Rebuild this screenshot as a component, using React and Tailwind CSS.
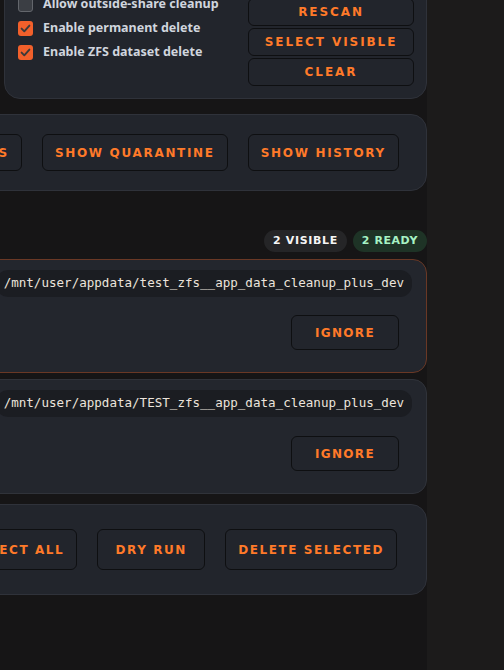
import React from "react";

const ui = { fontFamily: "'DejaVu Sans', 'Noto Sans', sans-serif" };
const labelFont = { fontFamily: "'Noto Sans', 'DejaVu Sans', sans-serif" };

function Check({ checked }) {
  if (!checked) {
    return (
      <span className="w-[15px] h-[15px] shrink-0 rounded-[3px] bg-[#3b3e44] border border-[#63666c]" />
    );
  }
  return (
    <span className="w-[15px] h-[15px] shrink-0 rounded-[3px] bg-[#f2602b] flex items-center justify-center">
      <svg width="15" height="15" viewBox="0 0 15 15">
        <polyline points="3.6,7.6 6.3,10.3 11.4,4.6" fill="none" stroke="#3b3a3a" strokeWidth="1.9" strokeLinecap="round" strokeLinejoin="round" />
      </svg>
    </span>
  );
}

function Btn({ children, className = "" }) {
  return (
    <button
      className={
        "flex items-center justify-center rounded-[6px] border border-[#0e0f11] bg-[#22252c] text-[#ff7a29] text-[12px] font-bold uppercase whitespace-nowrap " +
        className
      }
    >
      {children}
    </button>
  );
}

function Card({ path, selected, gap }) {
  return (
    <div
      className={
        "rounded-[14px] border bg-[#23262d] pt-[10px] pb-[22px] pl-4 pr-[14px] flex flex-col " +
        gap +
        (selected ? " border-[#6a3825]" : " border-[#30333a]")
      }
    >
      <div className="flex items-center justify-between">
        <div className="flex items-center gap-[10px] text-[#d0d5de] text-[12.5px] font-bold" style={labelFont}>
          <Check checked={selected} />
          <span>test_zfs__app_data_cleanup_plus_dev</span>
        </div>
        <div
          className="h-[27px] flex items-center rounded-xl bg-[#1b1d22] px-2 text-[12.55px] text-[#ece4dc]"
          style={{ fontFamily: "'DejaVu Sans Mono', monospace" }}
        >
          {path}
        </div>
      </div>
      <div className="flex justify-end pr-[13px]">
        <Btn className="h-[35px] min-w-[108px] px-3 tracking-[0.11em]">Ignore</Btn>
      </div>
    </div>
  );
}

export default function App() {
  return (
    <div className="h-[670px] w-full overflow-hidden bg-[#1c1b1b]" style={ui}>
      <div className="w-[847px] ml-[-420px] mt-[-44px] min-h-[740px] bg-[#161516] flex flex-col">
        <div className="grid grid-cols-[412px_1fr] gap-3 items-start">
          <div className="rounded-2xl border border-[#2f323a] bg-[#22252c] p-4 text-[#d0d5de] text-[12.5px] font-bold" style={labelFont}>
            Scan settings
          </div>
          <div className="rounded-2xl border border-[#2f323a] bg-[#22252c] pt-[11px] pb-3 pl-[13px] pr-3 flex justify-between">
            <div className="flex flex-col" style={labelFont}>
              {[
                ["Include system shares", true],
                ["Allow outside-share cleanup", false],
                ["Enable permanent delete", true],
                ["Enable ZFS dataset delete", true],
              ].map(([label, c]) => (
                <label key={label} className="h-6 flex items-center gap-[10px] text-[12.5px] font-bold text-[#d0d5de]">
                  <Check checked={c} />
                  <span>{label}</span>
                </label>
              ))}
            </div>
            <div className="w-[166px] flex flex-col gap-[2px]">
              <Btn className="h-[28px] tracking-[0.16em]">Scan</Btn>
              <Btn className="h-[28px] tracking-[0.16em]">Rescan</Btn>
              <Btn className="h-[28px] tracking-[0.16em]">Select visible</Btn>
              <Btn className="h-[28px] tracking-[0.16em]">Clear</Btn>
            </div>
          </div>
        </div>

        <div className="mt-[15px] rounded-2xl border border-[#2f323a] bg-[#22252c] py-[19px] pr-[27px] flex justify-end gap-5">
          <Btn className="h-[37px] min-w-[108px] px-3 tracking-[0.14em]">Show details</Btn>
          <Btn className="h-[37px] min-w-[108px] px-3 tracking-[0.14em]">Show quarantine</Btn>
          <Btn className="h-[37px] min-w-[108px] px-3 tracking-[0.14em]">Show history</Btn>
        </div>

        <div className="mt-[39px] mb-[7px] h-[22px] flex items-center justify-between">
          <span className="text-white text-sm font-bold">Candidates</span>
          <div className="flex items-center gap-[6px]">
            <span className="h-[22px] px-[9px] flex items-center rounded-full bg-[#252527] text-[#f5f5f5] text-[11px] font-bold tracking-[0.06em]">
              2 VISIBLE
            </span>
            <span className="h-[22px] px-[9px] flex items-center rounded-full bg-[#1e3326] text-[#a6f2c4] text-[11px] font-bold tracking-[0.05em]">
              2 READY
            </span>
          </div>
        </div>

        <div className="flex flex-col gap-[6px]">
          <Card selected gap="gap-[18px]" path="/mnt/user/appdata/test_zfs__app_data_cleanup_plus_dev" />
          <Card gap="gap-[19px]" path="/mnt/user/appdata/TEST_zfs__app_data_cleanup_plus_dev" />
        </div>

        <div className="mt-[10px] rounded-2xl border border-[#2f323a] bg-[#22252c] py-6 pr-[29px] flex justify-end gap-5">
          <Btn className="h-[41px] min-w-[108px] px-3 tracking-[0.13em]">Select all</Btn>
          <Btn className="h-[41px] min-w-[108px] px-3 tracking-[0.13em]">Dry run</Btn>
          <Btn className="h-[41px] min-w-[108px] px-3 tracking-[0.13em]">Delete selected</Btn>
        </div>
      </div>
    </div>
  );
}
